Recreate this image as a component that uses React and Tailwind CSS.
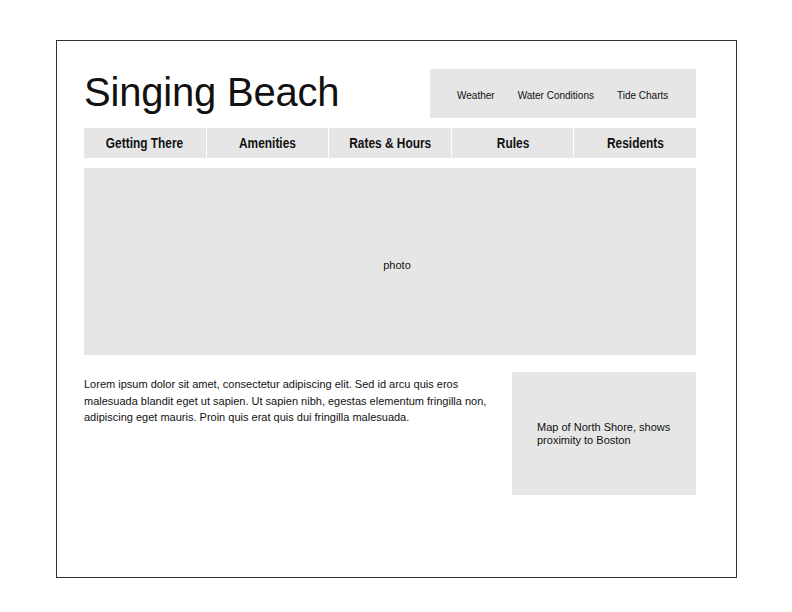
export default function App() {
    const tabs = ['Getting There', 'Amenities', 'Rates & Hours', 'Rules', 'Residents'];
    const links = ['Weather', 'Water Conditions', 'Tide Charts'];

    return (
        <div className="w-[792px] h-[612px] bg-white pt-[40px] pl-[56px] font-['Liberation_Sans',Arial,sans-serif] text-[#111]">
            <div className="w-[681px] h-[538px] border border-[#333] pt-[28px] pl-[27px]">
                <div className="w-[612px]">
                    {/* Header */}
                    <div className="flex justify-between items-start h-[49px]">
                        <h1 className="mt-[3px] text-[40px] leading-none font-normal tracking-[-0.2px]">Singing Beach</h1>
                        <div className="w-[266px] h-[49px] pt-[3px] pl-[27px] bg-[#e6e6e6] flex items-center gap-[23px] text-[10px]">
                            {links.map((l) => (
                                <span key={l}>{l}</span>
                            ))}
                        </div>
                    </div>

                    {/* Main nav */}
                    <div className="mt-[10px] grid grid-cols-5 gap-px bg-white">
                        {tabs.map((t) => (
                            <div key={t} className="h-[30px] bg-[#e6e6e6] flex items-center justify-center">
                                <span className="inline-block whitespace-nowrap text-[14px] font-bold scale-x-[0.85]">{t}</span>
                            </div>
                        ))}
                    </div>

                    {/* Photo */}
                    <div className="mt-[10px] h-[187px] pt-[8px] pl-[14px] bg-[#e6e6e6] flex items-center justify-center text-[11px]">
                        photo
                    </div>

                    {/* Content */}
                    <div className="mt-[17px] flex justify-between items-start">
                        <p className="w-[405px] mt-[4px] text-[11px] leading-[16.5px]">
                            Lorem ipsum dolor sit amet, consectetur adipiscing elit. Sed id arcu quis eros malesuada blandit eget ut sapien. Ut sapien nibh, egestas elementum fringilla non, adipiscing eget mauris. Proin quis erat quis dui fringilla malesuada.
                        </p>
                        <div className="w-[184px] h-[123px] bg-[#e6e6e6] flex items-center px-[25px] text-[11px] leading-[13px]">
                            Map of North Shore, shows proximity to Boston
                        </div>
                    </div>
                </div>
            </div>
        </div>
    );
}
